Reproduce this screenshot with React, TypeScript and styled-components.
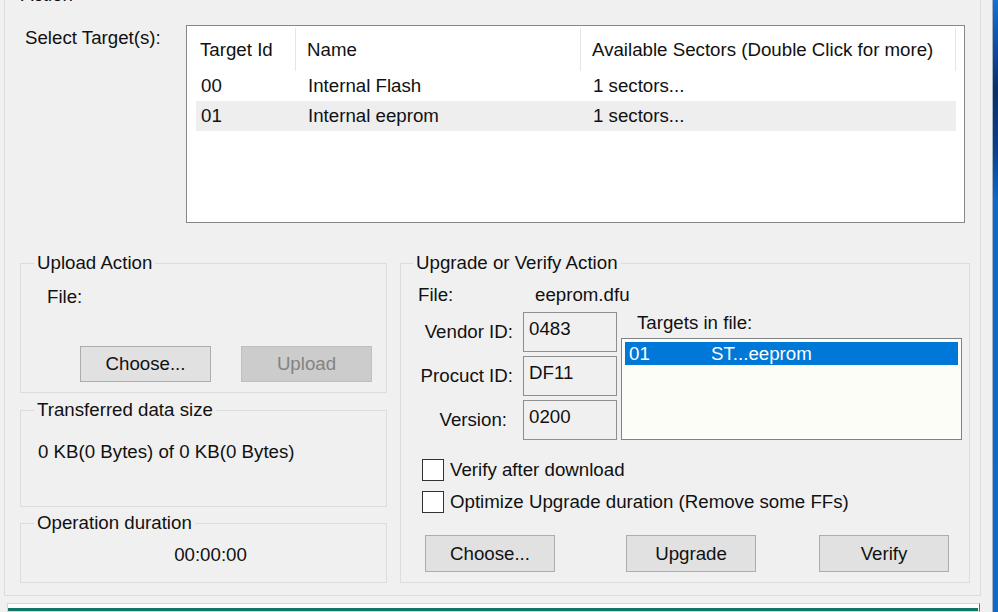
import React from "react";
import styled, { createGlobalStyle } from "styled-components";

const Global = createGlobalStyle`
  html, body { margin: 0; padding: 0; background: #f0f0f0; overflow: hidden; }
  body {
    font-family: "Liberation Sans", Arial, sans-serif;
    font-size: 18.7px;
    color: #111;
  }
  * { box-sizing: border-box; }
`;

const Screen = styled.div`
  width: 998px;
  height: 612px;
  display: flex;
  overflow: hidden;
  background: #f0f0f0;
`;

const Dialog = styled.div`
  width: 992px;
  flex: none;
  display: flex;
  flex-direction: column;
`;

const DesktopEdge = styled.div`
  flex: 1;
  border-left: 1px solid #9fb2c6;
  background: linear-gradient(
    to bottom,
    #1b6fd0 0px,
    #0e4a9a 50px,
    #0a2f6a 90px,
    #0c3f86 150px,
    #1266c8 200px,
    #1367c9 612px
  );
`;

const Group = styled.div<{ $w?: number; $h: number }>`
  border: 1px solid #dcdcdc;
  width: ${(p) => (p.$w ? `${p.$w}px` : "auto")};
  height: ${(p) => p.$h}px;
  display: flex;
  flex-direction: column;
  flex: none;
`;

const ActionGroup = styled(Group)`
  margin: -5px 0 0 4px;
`;

const GroupTitle = styled.div<{ $ml?: number }>`
  margin: -12px 0 0 ${(p) => p.$ml ?? 13}px;
  padding: 0 3px;
  background: #f0f0f0;
  align-self: flex-start;
  line-height: 22px;
  white-space: nowrap;
`;

const TopRow = styled.div`
  display: flex;
  margin: 19px 0 0 20px;
`;

const SideLabel = styled.div`
  width: 161px;
  padding-top: 2px;
  line-height: 22px;
  white-space: nowrap;
`;

const ListView = styled.div`
  width: 779px;
  height: 198px;
  border: 1px solid #878787;
  background: #ffffff;
  display: flex;
  flex-direction: column;
`;

const Header = styled.div`
  display: grid;
  grid-template-columns: 109px 285px 375px 1fr;
  height: 45px;
`;

const HeaderCell = styled.div<{ $pl: number }>`
  border-right: 1px solid #e5e5e5;
  margin-top: 2px;
  padding-left: ${(p) => p.$pl}px;
  display: flex;
  align-items: center;
  white-space: nowrap;
  overflow: hidden;
`;

const Row = styled.div<{ $hl?: boolean }>`
  display: grid;
  grid-template-columns: 100px 285px 375px;
  margin-left: 9px;
  width: 760px;
  height: 30px;
  align-items: center;
  background: ${(p) => (p.$hl ? "#eeeeee" : "transparent")};
`;

const Cell = styled.div<{ $pl: number }>`
  padding-left: ${(p) => p.$pl}px;
  white-space: nowrap;
`;

const LowerRow = styled.div`
  display: flex;
  margin: 40px 0 0 15px;
`;

const LeftCol = styled.div`
  display: flex;
  flex-direction: column;
  width: 367px;
`;

const Spaced = styled(Group)<{ $mt: number }>`
  margin-top: ${(p) => p.$mt}px;
`;

const Text = styled.div<{ $mt: number; $ml: number }>`
  margin: ${(p) => p.$mt}px 0 0 ${(p) => p.$ml}px;
  line-height: 22px;
  white-space: nowrap;
`;

const CenterText = styled.div`
  margin-top: 10px;
  padding-left: 14px;
  text-align: center;
  line-height: 22px;
`;

const ButtonRow = styled.div<{ $mt: number; $ml: number }>`
  display: flex;
  margin: ${(p) => p.$mt}px 0 0 ${(p) => p.$ml}px;
`;

const Button = styled.button<{ $w: number; $h: number; $ml?: number }>`
  width: ${(p) => p.$w}px;
  height: ${(p) => p.$h}px;
  margin-left: ${(p) => p.$ml ?? 0}px;
  border: 1px solid #adadad;
  background: #e1e1e1;
  color: #111;
  font: inherit;
  padding: 0;
  border-radius: 0;
  flex: none;
  &:disabled {
    background: #cccccc;
    border-color: #bfbfbf;
    color: #838383;
  }
`;

const RightGroup = styled(Group)`
  margin-left: 13px;
`;

const FileRow = styled.div`
  display: flex;
  margin: 10px 0 0 17px;
  line-height: 22px;
`;

const FileKey = styled.div`
  width: 117px;
`;

const InfoRow = styled.div`
  display: flex;
  margin-top: 6px;
`;

const Fields = styled.div`
  display: grid;
  grid-template-columns: 112px 94px;
  column-gap: 10px;
  row-gap: 4px;
`;

const FieldLabel = styled.div<{ $pr?: number }>`
  text-align: right;
  line-height: 40px;
  padding-right: ${(p) => p.$pr ?? 0}px;
  white-space: nowrap;
`;

const FieldBox = styled.div`
  height: 40px;
  border: 1px solid #8e8e8e;
  background: #f0f0f0;
  padding: 5px;
  line-height: 22px;
`;

const TargetsPanel = styled.div`
  display: flex;
  flex-direction: column;
  margin-left: 4px;
`;

const TargetsLabel = styled.div`
  padding-left: 16px;
  line-height: 22px;
`;

const ListBox = styled.div`
  margin-top: 4px;
  width: 341px;
  height: 102px;
  border: 1px solid #828282;
  background: #fdfdf8;
  padding: 3px;
`;

const SelectedItem = styled.div`
  display: grid;
  grid-template-columns: 82px 1fr;
  height: 23px;
  line-height: 23px;
  padding-left: 4px;
  background: #0078d7;
  color: #ffffff;
`;

const CheckList = styled.div`
  display: flex;
  flex-direction: column;
  gap: 10px;
  margin: 19px 0 0 21px;
`;

const CheckRow = styled.label`
  display: flex;
  align-items: center;
  gap: 6px;
  height: 22px;
  white-space: nowrap;
`;

const CheckBox = styled.span`
  width: 22px;
  height: 22px;
  border: 1px solid #333333;
  background: #ffffff;
  flex: none;
`;

const ProgressFrame = styled.div`
  margin: 7px 0 0 7px;
  width: 973px;
  height: 20px;
  border: 1px solid #d6d6d6;
  border-right-color: #6a6a6a;
  background: #ffffff;
  padding: 4px 1px 0 0;
`;

const ProgressFill = styled.div`
  height: 100%;
  background: #107466;
`;

export default function App() {
  return (
    <>
      <Global />
      <Screen>
        <Dialog>
          <ActionGroup $w={977} $h={601}>
            <GroupTitle>Action</GroupTitle>
            <TopRow>
              <SideLabel>Select Target(s):</SideLabel>
              <ListView>
                <Header>
                  <HeaderCell $pl={13}>Target Id</HeaderCell>
                  <HeaderCell $pl={11}>Name</HeaderCell>
                  <HeaderCell $pl={11}>Available Sectors (Double Click for more)</HeaderCell>
                  <div />
                </Header>
                <Row>
                  <Cell $pl={5}>00</Cell>
                  <Cell $pl={12}>Internal Flash</Cell>
                  <Cell $pl={12}>1 sectors...</Cell>
                </Row>
                <Row $hl>
                  <Cell $pl={5}>01</Cell>
                  <Cell $pl={12}>Internal eeprom</Cell>
                  <Cell $pl={12}>1 sectors...</Cell>
                </Row>
              </ListView>
            </TopRow>

            <LowerRow>
              <LeftCol>
                <Group $h={130}>
                  <GroupTitle>Upload Action</GroupTitle>
                  <Text $mt={12} $ml={26}>File:</Text>
                  <ButtonRow $mt={38} $ml={59}>
                    <Button $w={131} $h={36}>Choose...</Button>
                    <Button $w={131} $h={36} $ml={30} disabled>Upload</Button>
                  </ButtonRow>
                </Group>
                <Spaced $h={97} $mt={17}>
                  <GroupTitle>Transferred data size</GroupTitle>
                  <Text $mt={20} $ml={17}>0 KB(0 Bytes) of 0 KB(0 Bytes)</Text>
                </Spaced>
                <Spaced $h={60} $mt={16}>
                  <GroupTitle>Operation duration</GroupTitle>
                  <CenterText>00:00:00</CenterText>
                </Spaced>
              </LeftCol>

              <RightGroup $w={570} $h={320}>
                <GroupTitle $ml={12}>Upgrade or Verify Action</GroupTitle>
                <FileRow>
                  <FileKey>File:</FileKey>
                  <div>eeprom.dfu</div>
                </FileRow>
                <InfoRow>
                  <Fields>
                    <FieldLabel>Vendor ID:</FieldLabel>
                    <FieldBox>0483</FieldBox>
                    <FieldLabel>Procuct ID:</FieldLabel>
                    <FieldBox>DF11</FieldBox>
                    <FieldLabel $pr={6}>Version:</FieldLabel>
                    <FieldBox>0200</FieldBox>
                  </Fields>
                  <TargetsPanel>
                    <TargetsLabel>Targets in file:</TargetsLabel>
                    <ListBox>
                      <SelectedItem>
                        <span>01</span>
                        <span>ST...eeprom</span>
                      </SelectedItem>
                    </ListBox>
                  </TargetsPanel>
                </InfoRow>
                <CheckList>
                  <CheckRow>
                    <CheckBox />
                    Verify after download
                  </CheckRow>
                  <CheckRow>
                    <CheckBox />
                    Optimize Upgrade duration (Remove some FFs)
                  </CheckRow>
                </CheckList>
                <ButtonRow $mt={22} $ml={24}>
                  <Button $w={130} $h={37}>Choose...</Button>
                  <Button $w={130} $h={37} $ml={71}>Upgrade</Button>
                  <Button $w={130} $h={37} $ml={63}>Verify</Button>
                </ButtonRow>
              </RightGroup>
            </LowerRow>
          </ActionGroup>
          <ProgressFrame>
            <ProgressFill />
          </ProgressFrame>
        </Dialog>
        <DesktopEdge />
      </Screen>
    </>
  );
}
